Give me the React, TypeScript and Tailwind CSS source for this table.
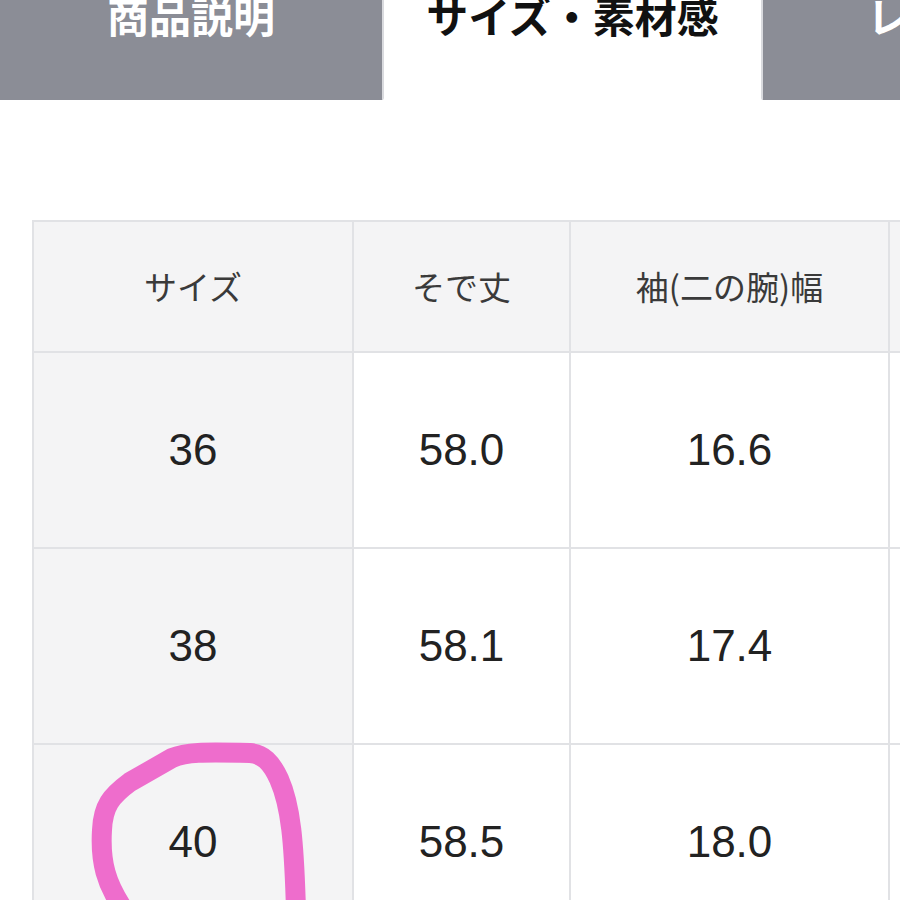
import React from 'react';

const headers = ['サイズ', 'そで丈', '袖(二の腕)幅', ''];
const rows = [
  ['36', '58.0', '16.6', ''],
  ['38', '58.1', '17.4', ''],
  ['40', '58.5', '18.0', ''],
];

const jp = { fontFamily: '"Noto Sans CJK JP", "Noto Sans", sans-serif' };
const num = { fontFamily: '"Liberation Sans", Arial, sans-serif' };

function Tabs() {
  return (
    <div className="flex h-[140px] mt-[-40px] bg-white" style={jp}>
      <div className="w-[384px] shrink-0 bg-[#8b8d96] border-r-2 border-[#d9dade] rounded-br-[2px] flex justify-center pt-[33px]">
        <span className="text-[42px] leading-[44px] font-bold text-white">商品説明</span>
      </div>
      <div className="w-[377px] shrink-0 bg-white flex justify-center pt-[33px]">
        <span className="text-[42px] leading-[44px] font-bold text-[#111]">サイズ・素材感</span>
      </div>
      <div className="w-[200px] shrink-0 bg-[#8b8d96] border-l-2 border-[#d9dade] rounded-bl-[2px] pt-[33px] pl-[104px]">
        <span className="text-[42px] leading-[44px] font-bold text-white whitespace-nowrap">レビュー</span>
      </div>
    </div>
  );
}

function SizeTable() {
  const cols = 'grid grid-cols-[320px_217px_319px_200px]';
  return (
    <div className="ml-[32px] w-[1060px] border-l-2 border-t-2 border-[#e1e2e5]">
      <div className={cols}>
        {headers.map((h, i) => (
          <div
            key={i}
            className="h-[131px] bg-[#f4f4f5] border-r-2 border-b-2 border-[#e1e2e5] flex items-center justify-center text-[33px] text-[#3a3a3a]"
            style={jp}
          >
            {h}
          </div>
        ))}
      </div>
      {rows.map((r, ri) => (
        <div key={ri} className={cols}>
          {r.map((c, ci) => (
            <div
              key={ci}
              className={
                'h-[196px] border-r-2 border-b-2 border-[#e1e2e5] flex items-center justify-center text-[44px] text-[#222] ' +
                (ci === 0 ? 'bg-[#f4f4f5]' : 'bg-white')
              }
              style={num}
            >
              {c}
            </div>
          ))}
        </div>
      ))}
    </div>
  );
}

export default function App() {
  return (
    <div className="relative w-[900px] h-[900px] overflow-hidden bg-white">
      <Tabs />
      <div className="pt-[120px]">
        <SizeTable />
      </div>
      {/* hand-drawn marker around size 40 */}
      <svg className="absolute left-0 top-0 pointer-events-none" width="900" height="900" viewBox="0 0 900 900">
        <path
          d="M 124 910 C 106 884 100 862 102 830 C 103 806 111 796 130 782 L 172 758 C 186 752 202 752 250 753 C 263 754 271 762 279 779 C 291 806 294 842 296 910"
          fill="none"
          stroke="#ee6dcc"
          strokeWidth="20"
          strokeLinecap="round"
          strokeLinejoin="round"
        />
      </svg>
    </div>
  );
}
